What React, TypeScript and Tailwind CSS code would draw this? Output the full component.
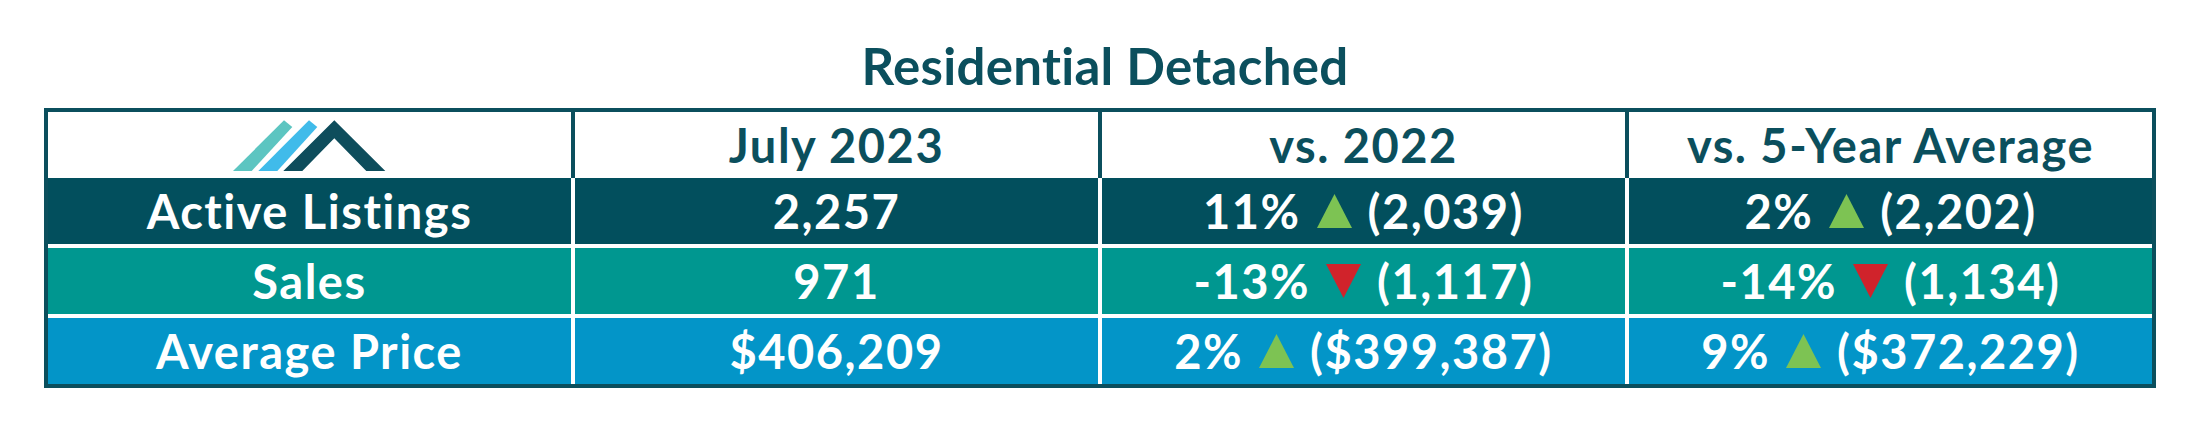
const rows = [
    {
        label: "Active Listings",
        bg: "bg-[#024f5d]",
        value: "2,257",
        vsYear: { pct: "11%", up: true, prev: "(2,039)" },
        vsAvg: { pct: "2%", up: true, prev: "(2,202)" },
    },
    {
        label: "Sales",
        bg: "bg-[#009790]",
        value: "971",
        vsYear: { pct: "-13%", up: false, prev: "(1,117)" },
        vsAvg: { pct: "-14%", up: false, prev: "(1,134)" },
    },
    {
        label: "Average Price",
        bg: "bg-[#0395c8]",
        value: "$406,209",
        vsYear: { pct: "2%", up: true, prev: "($399,387)" },
        vsAvg: { pct: "9%", up: true, prev: "($372,229)" },
    },
];

const Logo = () => (
    <svg width="153" height="51" viewBox="0 0 153 51">
        <polygon points="0,51 18.7,51 59.3,7 51,0.3" fill="#5cc5c1" />
        <polygon points="25.3,51 44.3,51 84.3,7 76,0.3" fill="#40bbea" />
        <polygon points="50.3,51 69.3,51 101.3,18.3 133.3,51 152.3,51 101.3,0.3" fill="#0e4d5c" />
    </svg>
);

const Arrow = ({ up }: { up: boolean }) => (
    <svg width="35" height="34" viewBox="0 0 35 34" className="mx-[16px] shrink-0">
        {up ? (
            <polygon points="0,34 35,34 17.5,0" fill="#7dc353" />
        ) : (
            <polygon points="0,0 35,0 17.5,34" fill="#d0232b" />
        )}
    </svg>
);

const Change = ({ pct, up, prev }: { pct: string; up: boolean; prev: string }) => (
    <div className="flex items-center">
        <span>{pct}</span>
        <Arrow up={up} />
        <span>{prev}</span>
    </div>
);

export default function App() {
    return (
        <div className="w-[2200px] h-[446px] bg-white pt-[35px] px-[44px] font-[Lato,sans-serif] font-bold">
            <h1 className="text-center text-[51px] leading-[1.2] tracking-[0.3px] text-[#0b4f5d] pl-[10px]">Residential Detached</h1>
            <div className="mt-[12px] border-4 border-[#0b4f5d] bg-[#0b4f5d]">
                <div className="grid grid-cols-4 gap-x-[4px] text-[47px] tracking-[1.5px] text-[#0b4f5d]">
                    <div className="h-[66px] bg-white flex items-center justify-center">
                        <Logo />
                    </div>
                    <div className="h-[66px] bg-white flex items-center justify-center">July 2023</div>
                    <div className="h-[66px] bg-white flex items-center justify-center">vs. 2022</div>
                    <div className="h-[66px] bg-white flex items-center justify-center">vs. 5-Year Average</div>
                </div>
                <div className="flex flex-col gap-y-[4px] bg-white text-[47px] tracking-[1.5px] text-white">
                    {rows.map((r) => (
                        <div key={r.label} className="grid grid-cols-4 gap-x-[4px]">
                            <div className={`h-[66px] ${r.bg} flex items-center justify-center`}>{r.label}</div>
                            <div className={`h-[66px] ${r.bg} flex items-center justify-center`}>{r.value}</div>
                            <div className={`h-[66px] ${r.bg} flex items-center justify-center`}>
                                <Change {...r.vsYear} />
                            </div>
                            <div className={`h-[66px] ${r.bg} flex items-center justify-center`}>
                                <Change {...r.vsAvg} />
                            </div>
                        </div>
                    ))}
                </div>
            </div>
        </div>
    );
}
